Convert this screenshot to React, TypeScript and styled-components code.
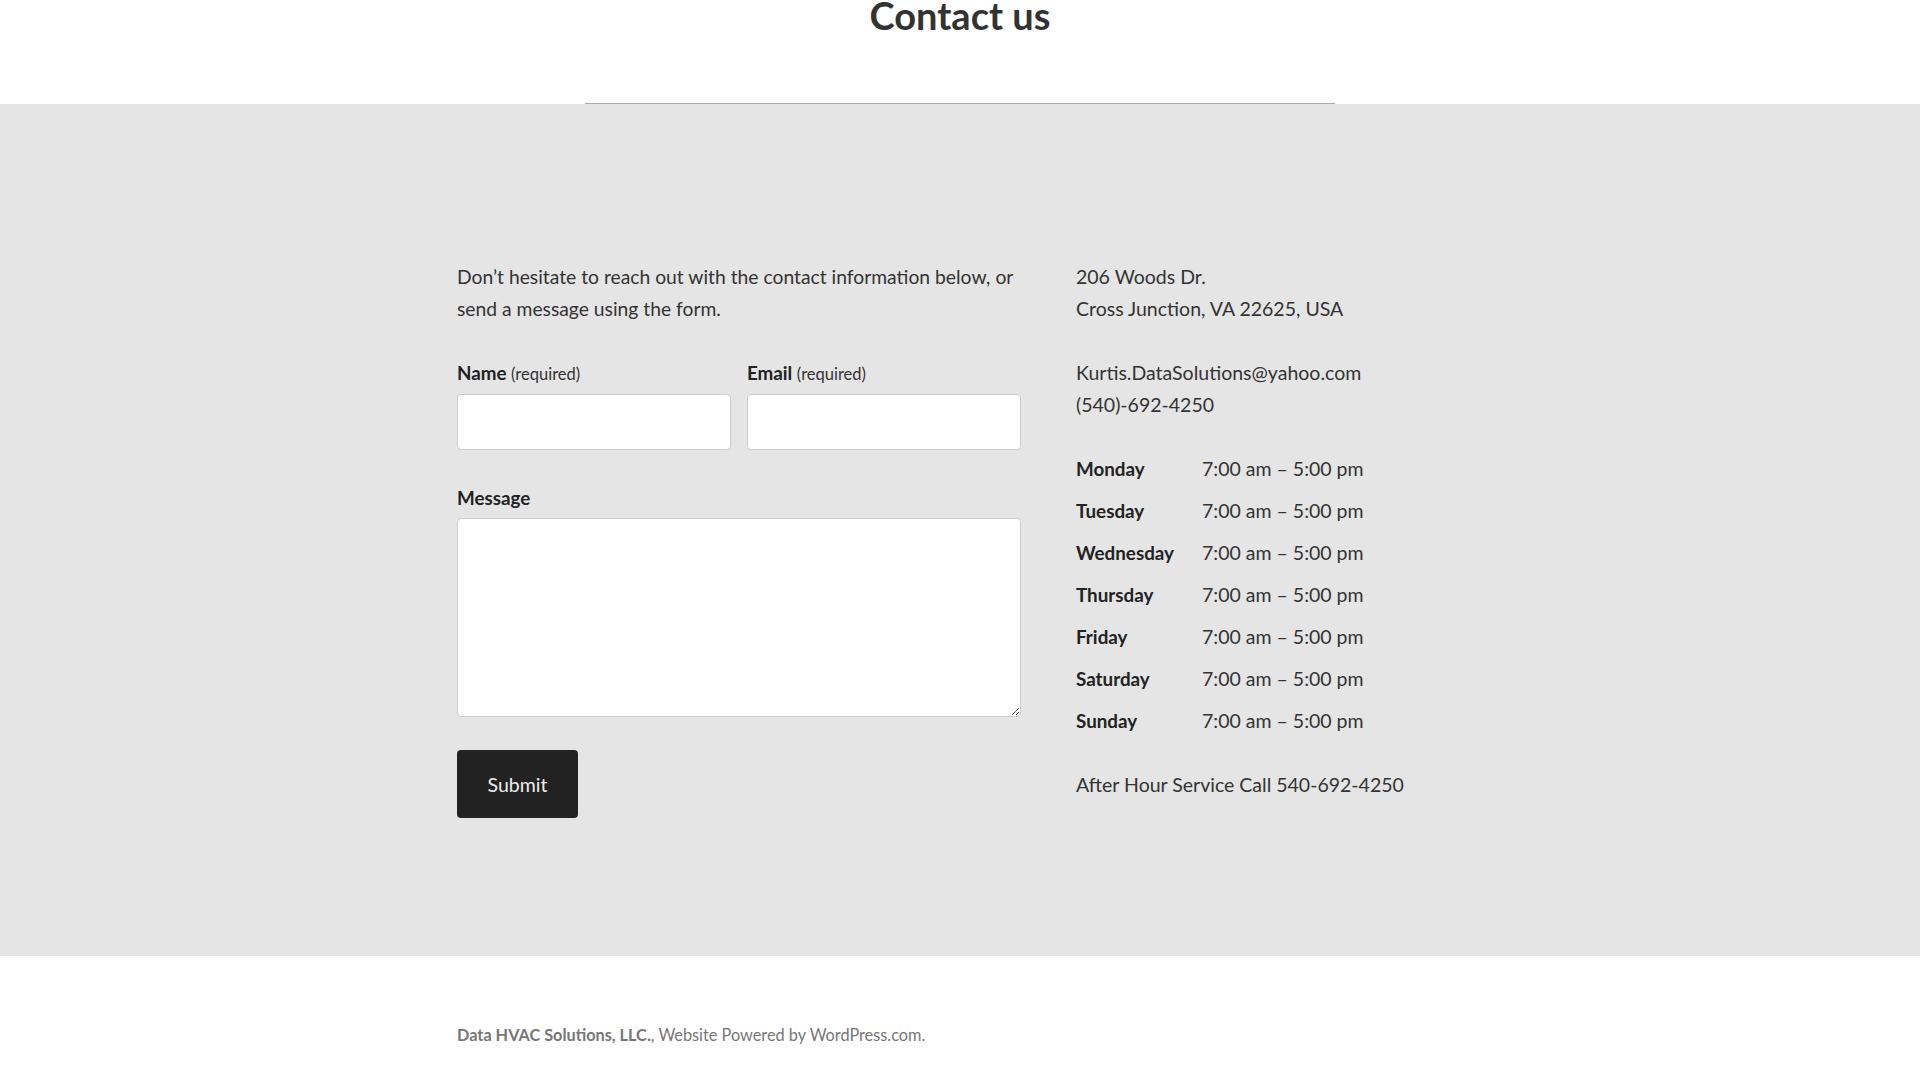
import React from "react";
import styled, { createGlobalStyle } from "styled-components";

const GlobalStyle = createGlobalStyle`
  html, body { margin: 0; padding: 0; background: #fff; }
  body {
    font-family: Lato, "Open Sans", "Noto Sans", sans-serif;
    color: #333;
    -webkit-font-smoothing: antialiased;
  }
  * { box-sizing: border-box; }
`;

const Page = styled.div`
  width: 1920px;
  min-height: 1080px;
  overflow: hidden;
`;

const Header = styled.header`
  height: 104px;
  display: flex;
  flex-direction: column;
  align-items: center;
  justify-content: space-between;
`;

const Title = styled.h1`
  margin: -7px 0 0;
  font-size: 38px;
  font-weight: 700;
  line-height: 1.2;
  color: #333;
`;

const Rule = styled.hr`
  width: 750px;
  height: 0;
  margin: 0;
  border: 0;
  border-top: 1px solid #aaa;
`;

const Band = styled.main`
  background: #e5e5e5;
  height: 852px;
  padding-top: 157px;
`;

const Container = styled.div`
  width: 1006px;
  margin: 0 auto;
  display: grid;
  grid-template-columns: 564px 1fr;
  column-gap: 55px;
`;

const Column = styled.div`
  display: flex;
  flex-direction: column;
  align-items: flex-start;
`;

const Text = styled.p<{ $gap?: number; $size?: number }>`
  margin: 0 0 ${(p) => p.$gap ?? 0}px;
  font-size: ${(p) => p.$size ?? 19.5}px;
  line-height: 32px;
  color: #333;
`;

const FieldRow = styled.div`
  display: grid;
  grid-template-columns: 274px 274px;
  column-gap: 16px;
  margin-bottom: 32px;
  width: 564px;
`;

const Field = styled.div`
  display: flex;
  flex-direction: column;
`;

const Label = styled.label`
  display: block;
  font-size: 18.8px;
  font-weight: 700;
  line-height: 32px;
  margin-bottom: 4px;
  color: #222;
`;

const Required = styled.span`
  font-size: 16.5px;
  font-weight: 400;
  color: #333;
`;

const Input = styled.input`
  width: 100%;
  height: 56px;
  background: #fff;
  border: 1px solid #ccc;
  border-radius: 4px;
  padding: 8px 12px;
  font: inherit;
`;

const TextArea = styled.textarea`
  width: 564px;
  height: 199px;
  background: #fff;
  border: 1px solid #ccc;
  border-radius: 4px;
  padding: 8px 12px;
  font: inherit;
  display: block;
`;

const Button = styled.button`
  margin-top: 33px;
  width: 121px;
  height: 68px;
  background: #222;
  color: #eee;
  border: 0;
  border-radius: 4px;
  font-family: inherit;
  font-size: 19.5px;
  cursor: pointer;
`;

const Hours = styled.div`
  margin: 27px 0;
  display: flex;
  flex-direction: column;
`;

const HoursRow = styled.div`
  display: grid;
  grid-template-columns: 126px auto;
  height: 42px;
  align-items: center;
  line-height: 32px;
`;

const Day = styled.span`
  font-size: 18.8px;
  font-weight: 700;
  color: #222;
`;

const Time = styled.span`
  font-size: 19.5px;
  color: #333;
`;

const Footer = styled.footer`
  height: 124px;
  padding-top: 67px;
`;

const FooterInner = styled.div`
  width: 1006px;
  margin: 0 auto;
  font-size: 16.3px;
  line-height: 24px;
  color: #767676;
`;

const FooterBrand = styled.strong`
  font-weight: 700;
`;

const days = ["Monday", "Tuesday", "Wednesday", "Thursday", "Friday", "Saturday", "Sunday"];

export default function App() {
  return (
    <Page>
      <GlobalStyle />
      <Header>
        <Title>Contact us</Title>
        <Rule />
      </Header>
      <Band>
        <Container>
          <Column>
            <Text $gap={32} $size={19.3}>
              Don’t hesitate to reach out with the contact information below, or send a message using the form.
            </Text>
            <FieldRow>
              <Field>
                <Label>
                  Name <Required>(required)</Required>
                </Label>
                <Input type="text" />
              </Field>
              <Field>
                <Label>
                  Email <Required>(required)</Required>
                </Label>
                <Input type="email" />
              </Field>
            </FieldRow>
            <Label>Message</Label>
            <TextArea />
            <Button>Submit</Button>
          </Column>
          <Column>
            <Text $gap={32}>
              206 Woods Dr.
              <br />
              Cross Junction, VA 22625, USA
            </Text>
            <Text>Kurtis.DataSolutions@yahoo.com</Text>
            <Text>(540)-692-4250</Text>
            <Hours>
              {days.map((d) => (
                <HoursRow key={d}>
                  <Day>{d}</Day>
                  <Time>7:00 am – 5:00 pm</Time>
                </HoursRow>
              ))}
            </Hours>
            <Text>After Hour Service Call 540-692-4250</Text>
          </Column>
        </Container>
      </Band>
      <Footer>
        <FooterInner>
          <FooterBrand>Data HVAC Solutions, LLC.</FooterBrand>, Website Powered by WordPress.com.
        </FooterInner>
      </Footer>
    </Page>
  );
}
